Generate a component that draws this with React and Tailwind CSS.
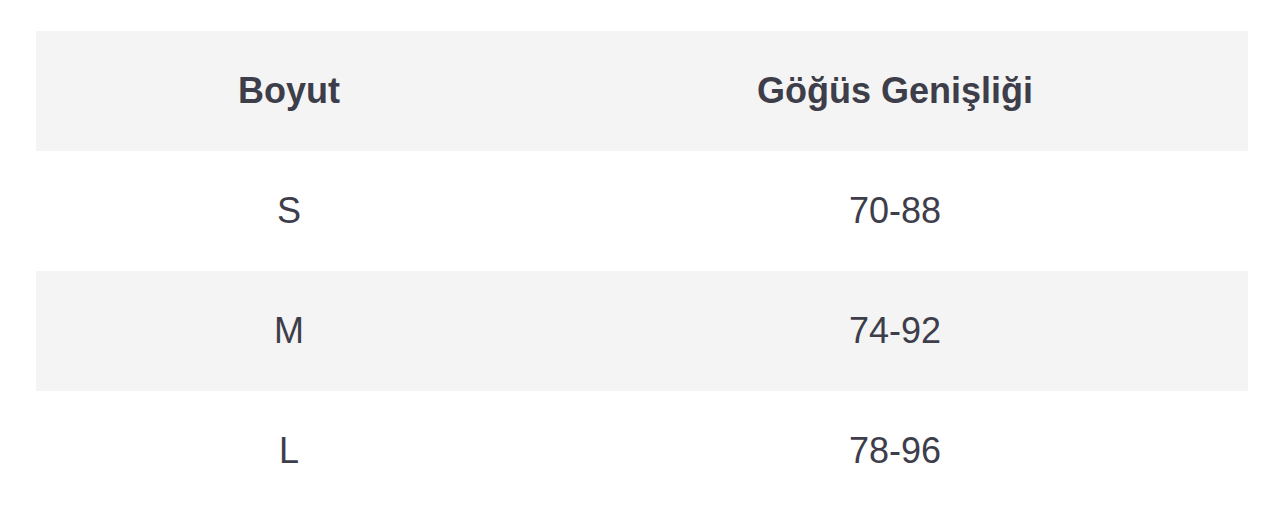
import React from 'react';

const rows = [
    { size: 'S', chest: '70-88' },
    { size: 'M', chest: '74-92' },
    { size: 'L', chest: '78-96' },
];

const App = () => {
    return (
        <div className="bg-white w-[1284px] h-[528px] pt-[31px] px-[36px] font-['Liberation_Sans',Arial,sans-serif] text-[#3d3e4a]">
            <table className="w-[1212px] border-collapse">
                <thead>
                    <tr className="bg-[#f4f4f4] h-[120px]">
                        <th className="w-[506px] text-center text-[36px] font-bold p-0">Boyut</th>
                        <th className="text-center text-[36px] font-bold p-0">Göğüs Genişliği</th>
                    </tr>
                </thead>
                <tbody>
                    {rows.map((row, index) => (
                        <tr key={index} className={index % 2 === 1 ? 'bg-[#f4f4f4] h-[120px]' : 'bg-white h-[120px]'}>
                            <td className="text-center text-[36px] p-0">{row.size}</td>
                            <td className="text-center text-[36px] p-0">{row.chest}</td>
                        </tr>
                    ))}
                </tbody>
            </table>
        </div>
    );
};

export default App;
